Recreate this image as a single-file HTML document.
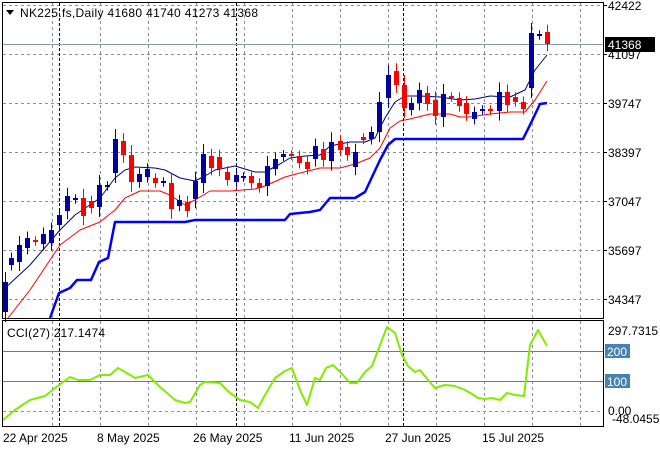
<!DOCTYPE html>
<html><head><meta charset="utf-8"><style>
html,body{margin:0;padding:0;background:#fff;width:660px;height:450px;overflow:hidden}
svg{display:block;font-family:"Liberation Sans",sans-serif}
</style></head><body>
<svg id="s" width="660" height="450" xmlns="http://www.w3.org/2000/svg">
<rect width="660" height="450" fill="#fff"/>
<g id="grid" stroke="#8a9099" stroke-dasharray="3,3" stroke-width="1"></g>
<g stroke="#000" stroke-dasharray="3,2">
<line x1="59.5" y1="3" x2="59.5" y2="426"/><line x1="236.5" y1="3" x2="236.5" y2="426"/><line x1="403.5" y1="3" x2="403.5" y2="426"/>
</g>
<line x1="2" y1="44.5" x2="603" y2="44.5" stroke="#8a9aa8"/>
<line x1="2" y1="351.5" x2="603" y2="351.5" stroke="#4682b4"/>
<line x1="2" y1="381.5" x2="603" y2="381.5" stroke="#4682b4"/>
<g id="lines" fill="none"></g>
<g id="cdl"></g>
<rect x="2.5" y="2.5" width="601" height="316" fill="none" stroke="#000"/>
<rect x="2.5" y="320.5" width="601" height="106" fill="none" stroke="#000"/>
<g font-size="12" fill="#000" id="ax"></g>
<polygon points="6,10 14,10 10,15" fill="#000"/>
<text x="20" y="17" font-size="12" textLength="238" lengthAdjust="spacing">NK225.fs,Daily  41680 41740 41273 41368</text>
<text x="7" y="337" font-size="12" textLength="98" lengthAdjust="spacing">CCI(27) 217.1474</text>
<rect x="605" y="37" width="50" height="15" fill="#000"/>
<text x="608" y="49" font-size="12" fill="#fff">41368</text>
<rect x="605" y="344" width="25" height="14" fill="#4682b4"/>
<text x="607" y="356" font-size="12" fill="#fff">200</text>
<rect x="605" y="374" width="25" height="14" fill="#4682b4"/>
<text x="607" y="386" font-size="12" fill="#fff">100</text>
<text x="608" y="335" font-size="12">297.7315</text>
<text x="608" y="415" font-size="12">0.00</text>
<text x="612" y="423" font-size="12">-48.0455</text>
<g font-size="12">
<text x="3" y="442">22 Apr 2025</text><text x="97" y="442">8 May 2025</text><text x="193" y="442">26 May 2025</text><text x="289" y="442">11 Jun 2025</text><text x="385" y="442">27 Jun 2025</text><text x="482" y="442">15 Jul 2025</text>
</g>
</svg>
<script>
var NS="http://www.w3.org/2000/svg";
function el(p,t,a){var e=document.createElementNS(NS,t);for(var k in a)e.setAttribute(k,a[k]);document.getElementById(p).appendChild(e);return e;}
for(var x=52;x<600;x+=48){el("grid","line",{x1:x+.5,y1:3,x2:x+.5,y2:318});el("grid","line",{x1:x+.5,y1:321,x2:x+.5,y2:426});}
[5,54,103,152,201,250,299].forEach(function(y){el("grid","line",{x1:3,y1:y+.5,x2:603,y2:y+.5});});
el("grid","line",{x1:3,y1:411.5,x2:603,y2:411.5});
var labs=[[42422,5],[41097,54],[39747,103],[38397,152],[37047,201],[35697,250],[34347,299]];
labs.forEach(function(l){el("ax","line",{x1:603,y1:l[1]+.5,x2:607,y2:l[1]+.5,stroke:"#000"});var t=el("ax","text",{x:608,y:l[1]+5});t.textContent=l[0];});
function pl(pts,c,w){el("lines","polyline",{points:pts,stroke:c,"stroke-width":w,"stroke-linejoin":"round"});}
pl("3,290 30,265 60,230 75,215 100,198 115,178 125,170 135,167 155,168 165,170 180,178 195,181 205,176 215,170 235,166 255,172 265,172 280,164 290,158 305,156 320,155 330,146 350,142 365,142 375,138 385,118 395,102 405,96 420,96 440,97 460,100 475,99 490,96 510,97 525,90 535,70 547,55","#000080",1);
pl("8,318 30,290 60,245 80,230 100,222 115,210 125,198 140,191 160,191 170,195 185,205 195,200 210,191 230,191 255,189 265,186 285,177 300,173 320,168 340,168 355,164 370,158 380,148 390,128 400,121 410,119 430,114 450,114 460,117 470,117 490,114 510,112 525,112 535,100 547,81","#ff0000",1);
pl("50,318 59,293 70,288 77,280 91,280 99,262 108,258 115,222 185,222 195,220 285,220 290,214 310,212 320,210 330,198 355,198 365,192 372,177 380,160 388,145 395,139 523,139 530,125 540,104 547,103","#0000ff",2.5);
pl("3,420 15,410 30,400 45,396 55,388 70,377 78,380 90,380 100,375 110,375 118,368 125,372 135,378 148,375 160,387 175,400 185,403 190,402 200,385 205,382 220,383 230,393 240,400 250,402 258,408 265,395 275,378 285,371 292,368 300,390 307,405 315,378 320,380 326,368 333,365 343,375 350,383 357,383 365,372 372,366 380,345 387,327 395,333 402,355 408,366 415,372 420,370 428,380 435,388 445,385 455,386 465,390 472,394 478,398 485,399 492,398 500,400 507,393 515,395 524,396 530,345 538,330 547,346","#7fec00",2);
var C=[[5,282,312,'b'],[11,258,265,'b'],[19,245,262,'b'],[27,238,248,'b'],[35,240,242,'r'],[43,234,244,'b'],[51,230,243,'b'],[59,215,225,'b'],[67,196,211,'b'],[75,198,199,'b'],[83,198,216,'r'],[91,201,208,'r'],[99,185,207,'b'],[107,185,186,'b'],[115,139,173,'b'],[123,141,155,'r'],[131,155,182,'r'],[139,174,182,'b'],[147,169,177,'b'],[155,178,183,'r'],[163,181,182,'b'],[171,183,209,'r'],[179,200,206,'b'],[187,202,211,'r'],[195,181,199,'b'],[203,154,183,'b'],[211,156,168,'r'],[219,157,169,'r'],[227,172,180,'r'],[236,175,182,'b'],[243,176,177,'b'],[251,176,183,'r'],[259,183,188,'r'],[267,166,186,'b'],[275,159,169,'b'],[283,154,157,'b'],[291,154,156,'r'],[299,156,163,'r'],[307,162,169,'r'],[315,146,159,'b'],[323,149,160,'r'],[331,142,161,'b'],[340,141,150,'r'],[347,147,155,'r'],[355,152,167,'b'],[363,137,140,'r'],[371,132,139,'b'],[379,102,132,'b'],[388,75,98,'b'],[396,71,85,'r'],[404,85,108,'r'],[411,103,110,'b'],[419,90,103,'b'],[427,93,104,'r'],[435,100,116,'r'],[443,94,117,'b'],[451,96,97,'r'],[459,98,106,'r'],[466,103,114,'r'],[474,112,119,'b'],[482,109,111,'b'],[490,109,110,'r'],[499,92,111,'b'],[507,92,105,'r'],[515,97,102,'r'],[523,102,109,'r'],[531,33,88,'b'],[539,34,35,'b'],[547,32,44,'r']];
C.forEach(function(c){var col=c[3]=='b'?'#0000a0':'#ff0000';var h=Math.max(2,c[2]-c[1]);var wl=Math.max(3,Math.min(10,h*0.35+3));
el("cdl","line",{x1:c[0]+.5,y1:c[1]-wl,x2:c[0]+.5,y2:c[1]+h+wl,stroke:col});
el("cdl","rect",{x:c[0]-2,y:c[1],width:5,height:h,fill:col});});
</script>
</body></html>
